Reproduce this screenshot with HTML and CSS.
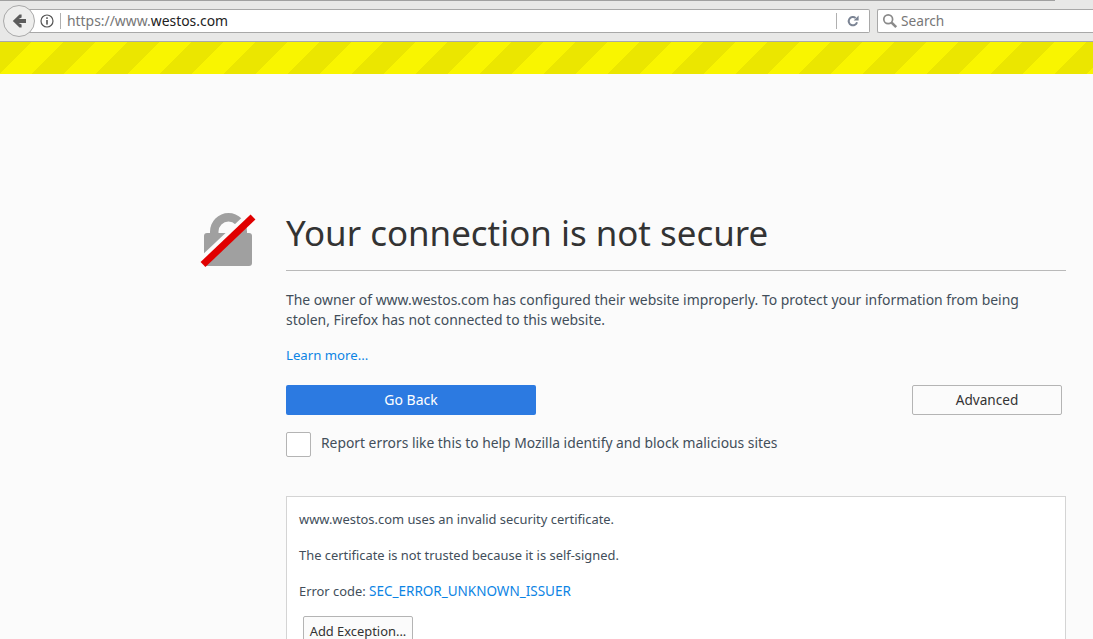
FILE: index.html
```html
<!DOCTYPE html>
<html>
<head>
    <meta charset="utf-8" />
    <title>Insecure Connection</title>
    <link rel="stylesheet" href="styles.css">
</head>
<body>
    <div class="toolbar">
        <div class="tab-line"></div>
        <div class="nav-row">
            <div class="back-btn">
                <svg width="18" height="18" viewBox="0 0 18 18"><path d="M9.5 2.5 L2.8 9 L9.5 15.5 L11.6 15.5 L11.6 12.6 L8.6 10.9 L16 10.9 L16 7.1 L8.6 7.1 L11.6 5.4 L11.6 2.5 Z" fill="#5c5c5c"/></svg>
            </div>
            <div class="url-bar">
                <svg class="info-icon" width="14" height="14" viewBox="0 0 14 14"><circle cx="7" cy="7" r="6" fill="none" stroke="#555" stroke-width="1.2"/><rect x="6.2" y="6" width="1.6" height="4.6" fill="#555"/><rect x="6.2" y="3.3" width="1.6" height="1.6" fill="#555"/></svg>
                <span class="url-sep"></span>
                <span class="url-text">https://www.<b>westos.com</b></span>
                <span class="url-sep reload-sep"></span>
                <svg class="reload-icon" width="14" height="14" viewBox="0 0 14 14"><path d="M11 8.2 A4.2 4.2 0 1 1 9.6 3.9" fill="none" stroke="#7b8494" stroke-width="2"/><path d="M7.6 6.4 L12.6 6.4 L12.6 1.4 Z" fill="#7b8494"/></svg>
            </div>
            <div class="search-bar">
                <svg width="16" height="16" viewBox="0 0 16 16"><circle cx="6.2" cy="6.2" r="4.4" fill="none" stroke="#8a8a8a" stroke-width="1.7"/><path d="M9.6 9.6 L14.2 14.2" stroke="#8a8a8a" stroke-width="2.6"/></svg>
                <span class="search-text">Search</span>
            </div>
        </div>
    </div>
    <div class="stripes"></div>

    <div class="page">
        <div class="lock-col">
            <svg width="60" height="60" viewBox="0 0 60 60">
                <path d="M12 23 L12 19.5 A18.5 18.5 0 0 1 49 19.5 L49 23 L40.5 23 L40.5 19.5 A10 10 0 0 0 20.5 19.5 L20.5 23 Z" fill="#a0a0a0"/>
                <rect x="6" y="21" width="48" height="33" rx="3" fill="#a0a0a0"/>
                <path d="M3 51 L54 3" stroke="#fbfbfb" stroke-width="10"/>
                <path d="M5 52.5 L55 5" stroke="#e00000" stroke-width="7"/>
            </svg>
        </div>
        <div class="main-col">
            <h1>Your connection is not secure</h1>
            <p class="desc">The owner of www.westos.com has configured their website improperly. To protect your information from being stolen, Firefox has not connected to this website.</p>
            <a class="learn" href="#">Learn more...</a>
            <div class="btn-row">
                <button class="btn-primary">Go Back</button>
                <button class="btn-plain">Advanced</button>
            </div>
            <div class="report-row">
                <span class="check"></span>
                <span class="report-text">Report errors like this to help Mozilla identify and block malicious sites</span>
            </div>
            <div class="details">
                <p>www.westos.com uses an invalid security certificate.</p>
                <p>The certificate is not trusted because it is self-signed.</p>
                <p class="code-line">Error code: <a href="#">SEC_ERROR_UNKNOWN_ISSUER</a></p>
                <button class="btn-exception">Add Exception...</button>
            </div>
        </div>
    </div>
</body>
</html>
```
FILE: styles.css
```css
html, body {
    margin: 0;
    height: 100%;
    overflow: hidden;
    font-family: "Noto Sans", "Open Sans", sans-serif;
    background-color: #fbfbfb;
    color: #424e5a;
}

.toolbar {
    height: 41px;
    background-color: #e8e8e7;
    border-bottom: 1px solid #a8a8a8;
}

.tab-line {
    height: 1px;
    width: 1055px;
    background-color: #a0a0a0;
}

.nav-row {
    display: flex;
    align-items: center;
    padding-top: 8px;
}

.back-btn {
    position: relative;
    z-index: 1;
    box-sizing: border-box;
    width: 32px;
    height: 32px;
    margin: -4px -8px -4px 3px;
    border: 1px solid #a9a9a9;
    border-radius: 50%;
    background-color: #eeeeed;
    display: flex;
    align-items: center;
    justify-content: center;
}

.url-bar {
    box-sizing: border-box;
    width: 843px;
    height: 24px;
    padding-left: 13px;
    border: 1px solid #a8a8a8;
    border-left: 0;
    border-radius: 0 2px 2px 0;
    background-color: #fff;
    display: flex;
    align-items: center;
    font-size: 13.9px;
    color: #777;
}

.info-icon {
    flex-shrink: 0;
}

.url-sep {
    width: 1px;
    height: 16px;
    margin: 0 6px 0 6px;
    background-color: #b0b0b0;
}

.url-text {
    flex-grow: 1;
    padding-bottom: 2px;
}

.url-text b {
    font-weight: normal;
    color: #222;
}

.reload-sep {
    margin: 0 9px 0 0;
}

.reload-icon {
    margin-right: 9px;
}

.search-bar {
    box-sizing: border-box;
    flex-grow: 1;
    height: 24px;
    margin-left: 7px;
    padding-left: 4px;
    border: 1px solid #a8a8a8;
    border-right: 0;
    border-radius: 2px 0 0 2px;
    background-color: #fff;
    display: flex;
    align-items: center;
    gap: 3px;
    font-size: 13.7px;
    color: #777;
}

.search-text {
    padding-bottom: 2px;
}

.stripes {
    height: 32px;
    background-color: #f9f500;
    background-image: repeating-linear-gradient(135deg, #ebe600 0, #ebe600 22.6px, #f9f500 22.6px, #f9f500 45.2px);
}

.page {
    display: flex;
    padding: 135px 27px 0 198px;
}

.lock-col {
    width: 88px;
    flex-shrink: 0;
    padding-top: 3px;
}

.main-col {
    flex-grow: 1;
}

h1 {
    margin: 0;
    padding-bottom: 14px;
    border-bottom: 1px solid #b9b9b9;
    font-size: 34.9px;
    font-weight: normal;
    line-height: 47px;
    color: #333;
}

.desc {
    margin: 19px 0 0;
    font-size: 13.95px;
    line-height: 20px;
}

a {
    color: #0c84e4;
    text-decoration: none;
}

.learn {
    display: block;
    margin-top: 15px;
    font-size: 13.2px;
    line-height: 20px;
}

.btn-row {
    display: flex;
    justify-content: space-between;
    margin-top: 20px;
    padding-right: 4px;
}

button {
    font-family: inherit;
    border-radius: 2px;
}

.btn-primary {
    width: 250px;
    height: 30px;
    border: 0;
    padding-bottom: 3px;
    font-size: 14px;
    background-color: #2c7ae1;
    color: #fff;
}

.btn-plain {
    width: 150px;
    height: 30px;
    border: 1px solid #b4b4b4;
    padding-bottom: 3px;
    font-size: 13.6px;
    background-color: #fbfbfb;
    color: #333;
}

.report-row {
    display: flex;
    align-items: center;
    gap: 10px;
    margin-top: 17px;
    font-size: 13.85px;
}

.report-text {
    padding-bottom: 4px;
}

.check {
    box-sizing: border-box;
    width: 25px;
    height: 25px;
    border: 1px solid #b4b4b4;
    border-radius: 2px;
    background-color: #fff;
}

.details {
    margin-top: 39px;
    padding: 13px 12px 14px;
    border: 1px solid #d4d4d4;
    background-color: #fff;
    font-size: 12.9px;
}

.details p {
    margin: 0 0 18px;
    line-height: 18px;
}

.details .code-line {
    margin-bottom: 16px;
}

.code-line a {
    font-size: 13.5px;
}

.btn-exception {
    height: 30px;
    width: 110px;
    padding: 0;
    margin-left: 4px;
    border: 1px solid #b4b4b4;
    background-color: #fbfbfb;
    color: #333;
    font-size: 12.9px;
}
```
